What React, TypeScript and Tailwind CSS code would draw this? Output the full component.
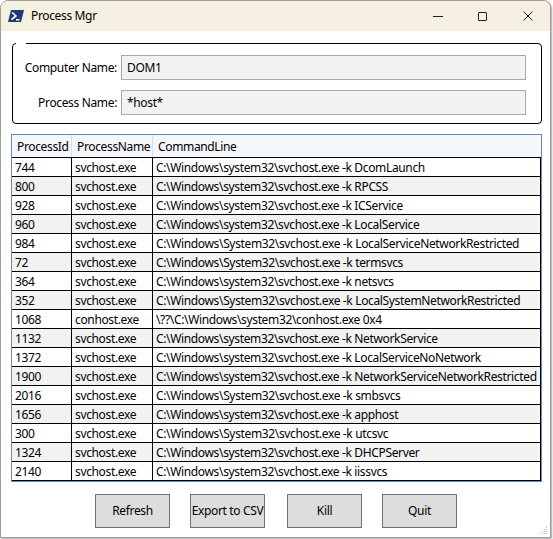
import React from "react";

const rows: [string, string, string][] = [
  ["744", "svchost.exe", "C:\\Windows\\system32\\svchost.exe -k DcomLaunch"],
  ["800", "svchost.exe", "C:\\Windows\\system32\\svchost.exe -k RPCSS"],
  ["928", "svchost.exe", "C:\\Windows\\system32\\svchost.exe -k ICService"],
  ["960", "svchost.exe", "C:\\Windows\\system32\\svchost.exe -k LocalService"],
  ["984", "svchost.exe", "C:\\Windows\\System32\\svchost.exe -k LocalServiceNetworkRestricted"],
  ["72", "svchost.exe", "C:\\Windows\\System32\\svchost.exe -k termsvcs"],
  ["364", "svchost.exe", "C:\\Windows\\system32\\svchost.exe -k netsvcs"],
  ["352", "svchost.exe", "C:\\Windows\\System32\\svchost.exe -k LocalSystemNetworkRestricted"],
  ["1068", "conhost.exe", "\\??\\C:\\Windows\\system32\\conhost.exe 0x4"],
  ["1132", "svchost.exe", "C:\\Windows\\system32\\svchost.exe -k NetworkService"],
  ["1372", "svchost.exe", "C:\\Windows\\system32\\svchost.exe -k LocalServiceNoNetwork"],
  ["1900", "svchost.exe", "C:\\Windows\\system32\\svchost.exe -k NetworkServiceNetworkRestricted"],
  ["2016", "svchost.exe", "C:\\Windows\\System32\\svchost.exe -k smbsvcs"],
  ["1656", "svchost.exe", "C:\\Windows\\system32\\svchost.exe -k apphost"],
  ["300", "svchost.exe", "C:\\Windows\\System32\\svchost.exe -k utcsvc"],
  ["1324", "svchost.exe", "C:\\Windows\\system32\\svchost.exe -k DHCPServer"],
  ["2140", "svchost.exe", "C:\\Windows\\system32\\svchost.exe -k iissvcs"],
];

function PsIcon() {
  return (
    <svg width="16" height="12" viewBox="0 0 16 12">
      <polygon points="3,0 16,0 13,12 0,12" fill="#1f3b73" />
      <polyline points="4,2.5 8,6 3.5,9.5" fill="none" stroke="#ffffff" strokeWidth="1.6" />
      <line x1="8" y1="9.8" x2="11.5" y2="9.8" stroke="#ffffff" strokeWidth="1.4" />
    </svg>
  );
}

function Field({ label, value }: { label: string; value: string }) {
  return (
    <div className="flex items-center h-[25px]">
      <div className="w-[108px] pr-[4px] text-right text-[12px] text-black whitespace-nowrap">{label}</div>
      <div className="w-[405px] h-[25px] bg-[#f2f2f2] border border-[#a9a9a9] flex items-center pl-[5px] pt-[1px] text-[12px] text-black">
        {value}
      </div>
    </div>
  );
}

function Btn({ label, className = "" }: { label: string; className?: string }) {
  return (
    <div
      className={
        "w-[75px] h-[34px] bg-[#dddddd] border border-[#707070] flex items-center justify-center text-[12px] text-black whitespace-nowrap " +
        className
      }
    >
      {label}
    </div>
  );
}

export default function App() {
  return (
    <div className="w-[553px] h-[539px] bg-white font-['Noto_Sans',sans-serif] tracking-[-0.35px]">
      <div className="w-[551px] h-[538px] border border-[#9c9c9c] rounded-t-[8px] overflow-hidden bg-white shadow-[1px_1px_2px_rgba(0,0,0,0.35)] flex flex-col relative">
        {/* Title bar */}
        <div className="h-[30px] bg-[#f5f0df] flex items-center shrink-0">
          <div className="pl-[7px] pr-[7px] flex items-center">
            <PsIcon />
          </div>
          <div className="text-[12px] text-black">Process Mgr</div>
          <div className="ml-auto flex h-full">
            <div className="w-[45px] h-full flex items-center justify-center">
              <div className="w-[10px] h-[1px] bg-[#222]" />
            </div>
            <div className="w-[45px] h-full flex items-center justify-center">
              <div className="w-[9px] h-[9px] border border-[#222] rounded-[1px]" />
            </div>
            <div className="w-[45px] h-full flex items-center justify-center">
              <svg width="10" height="10" viewBox="0 0 10 10">
                <path d="M0.5 0.5 L9.5 9.5 M9.5 0.5 L0.5 9.5" stroke="#222" strokeWidth="1" />
              </svg>
            </div>
          </div>
        </div>

        {/* Body */}
        <div className="flex-1 flex flex-col pl-[10px] pr-[10px]">
          {/* Group box */}
          <div className="mt-[12px] ml-[1px] w-[530px] h-[81px] border border-black rounded-[4px] relative flex flex-col pt-[11px] gap-[10px]">
            <div className="absolute -top-[1px] left-[3px] w-[10px] h-[1px] bg-white" />
            <Field label="Computer Name:" value="DOM1" />
            <Field label="Process Name:" value="*host*" />
          </div>

          {/* Data grid */}
          <div className="mt-[10px] w-[531px] border border-[#688caf] text-[12px] text-black">
            <div className="flex h-[23px] bg-[#f4f7fb] border-b border-black">
              <div className="w-[60px] border-r border-[#d5dfe5] pl-[5px] pt-[1px] flex items-center">ProcessId</div>
              <div className="w-[81px] border-r border-[#d5dfe5] pl-[5px] pt-[1px] flex items-center">ProcessName</div>
              <div className="flex-1 pl-[5px] pt-[1px] flex items-center">CommandLine</div>
            </div>
            {rows.map((r, i) => (
              <div
                key={i}
                className={
                  "flex h-[19px] border-b border-black " + (i % 2 === 1 ? "bg-[#f2f2f2]" : "bg-white")
                }
              >
                <div className="w-[60px] border-r border-black pl-[3px] pt-[2px] flex items-center whitespace-nowrap">{r[0]}</div>
                <div className="w-[81px] border-r border-black pl-[3px] pt-[2px] flex items-center whitespace-nowrap">{r[1]}</div>
                <div className="flex-1 border-r border-black pl-[3px] pt-[2px] flex items-center whitespace-nowrap overflow-hidden">{r[2]}</div>
              </div>
            ))}
          </div>

          {/* Buttons */}
          <div className="mt-[12px] flex pl-[84px]">
            <Btn label="Refresh" />
            <Btn label="Export to CSV" className="ml-[20px]" />
            <Btn label="Kill" className="ml-[22px]" />
            <Btn label="Quit" className="ml-[20px]" />
          </div>
        </div>

        {/* resize grip */}
        <svg className="absolute right-[2px] bottom-[2px]" width="8" height="8" viewBox="0 0 8 8">
          {[
            [6, 0], [6, 2], [4, 2], [6, 4], [4, 4], [2, 4], [6, 6], [4, 6], [2, 6], [0, 6],
          ].map(([x, y], k) => (
            <rect key={k} x={x} y={y} width="1" height="1" fill="#b8b8c8" />
          ))}
        </svg>
      </div>
    </div>
  );
}
